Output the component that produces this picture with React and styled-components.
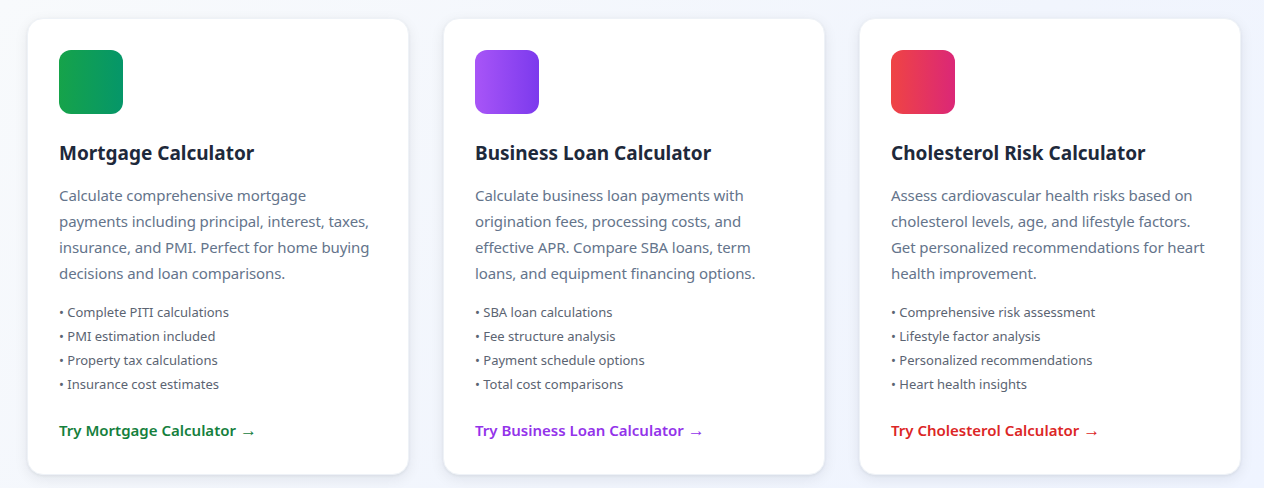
import React from 'react';
import styled, { createGlobalStyle } from 'styled-components';

const GlobalStyle = createGlobalStyle`
    html, body {
        margin:0;
        padding:0;
    }
    body {
        font-family: 'Noto Sans', 'Open Sans', sans-serif;
        background: linear-gradient(135deg, #f8fafc 0%, #f1f5fd 60%, #eff4ff 100%);
        min-height:488px;
    }
`

const Grid = styled.div`
    display:grid;
    grid-template-columns:repeat(3, 382px);
    gap:34px;
    padding:18px 0 14px 27px;
`

const Card = styled.div`
    background:white;
    border-radius:16px;
    border:1px solid #eef2f7;
    box-shadow:0 4px 14px rgba(15, 23, 42, 0.08), 0 1px 3px rgba(15, 23, 42, 0.06);
    padding:31px;
    display:flex;
    flex-direction:column;
`

const IconBox = styled.div`
    width:64px;
    height:64px;
    border-radius:12px;
    background:linear-gradient(90deg, ${p => p.from}, ${p => p.to});
    margin-bottom:25px;
`

const Title = styled.h3`
    margin:0 0 15px;
    font-size:19px;
    line-height:28px;
    font-weight:700;
    color:#1e293b;
`

const Desc = styled.p`
    margin:0 0 14px;
    font-size:15px;
    letter-spacing:-0.1px;
    line-height:26px;
    color:#64748b;
`

const Features = styled.ul`
    list-style:none;
    margin:0 0 22px;
    padding:0;
    font-size:13px;
    line-height:24px;
    color:#5b6472;
`

const Link = styled.a`
    font-size:15px;
    line-height:24px;
    font-weight:600;
    color:${p => p.color};
    text-decoration:none;
`

const Arrow = styled.span`
    font-family:'Liberation Sans', 'DejaVu Sans', sans-serif;
    font-weight:400;
    font-size:17px;
    margin-left:4px;
`

const cards = [
    {
        title: 'Mortgage Calculator',
        desc: 'Calculate comprehensive mortgage payments including principal, interest, taxes, insurance, and PMI. Perfect for home buying decisions and loan comparisons.',
        features: ['Complete PITI calculations', 'PMI estimation included', 'Property tax calculations', 'Insurance cost estimates'],
        link: 'Try Mortgage Calculator',
        from: '#16a34a', to: '#059669', color: '#15803d',
    },
    {
        title: 'Business Loan Calculator',
        desc: 'Calculate business loan payments with origination fees, processing costs, and effective APR. Compare SBA loans, term loans, and equipment financing options.',
        features: ['SBA loan calculations', 'Fee structure analysis', 'Payment schedule options', 'Total cost comparisons'],
        link: 'Try Business Loan Calculator',
        from: '#a855f7', to: '#7c3aed', color: '#9333ea',
    },
    {
        title: 'Cholesterol Risk Calculator',
        desc: 'Assess cardiovascular health risks based on cholesterol levels, age, and lifestyle factors. Get personalized recommendations for heart health improvement.',
        features: ['Comprehensive risk assessment', 'Lifestyle factor analysis', 'Personalized recommendations', 'Heart health insights'],
        link: 'Try Cholesterol Calculator',
        from: '#ef4444', to: '#db2777', color: '#dc2626',
    },
];

const App = () => {
    return (
        <>
            <GlobalStyle />
            <Grid>
                {cards.map(c => (
                    <Card key={c.title}>
                        <IconBox from={c.from} to={c.to} />
                        <Title>{c.title}</Title>
                        <Desc>{c.desc}</Desc>
                        <Features>
                            {c.features.map(f => <li key={f}>• {f}</li>)}
                        </Features>
                        <Link href="#" color={c.color}>{c.link}<Arrow>→</Arrow></Link>
                    </Card>
                ))}
            </Grid>
        </>
    );
}

export default App;
